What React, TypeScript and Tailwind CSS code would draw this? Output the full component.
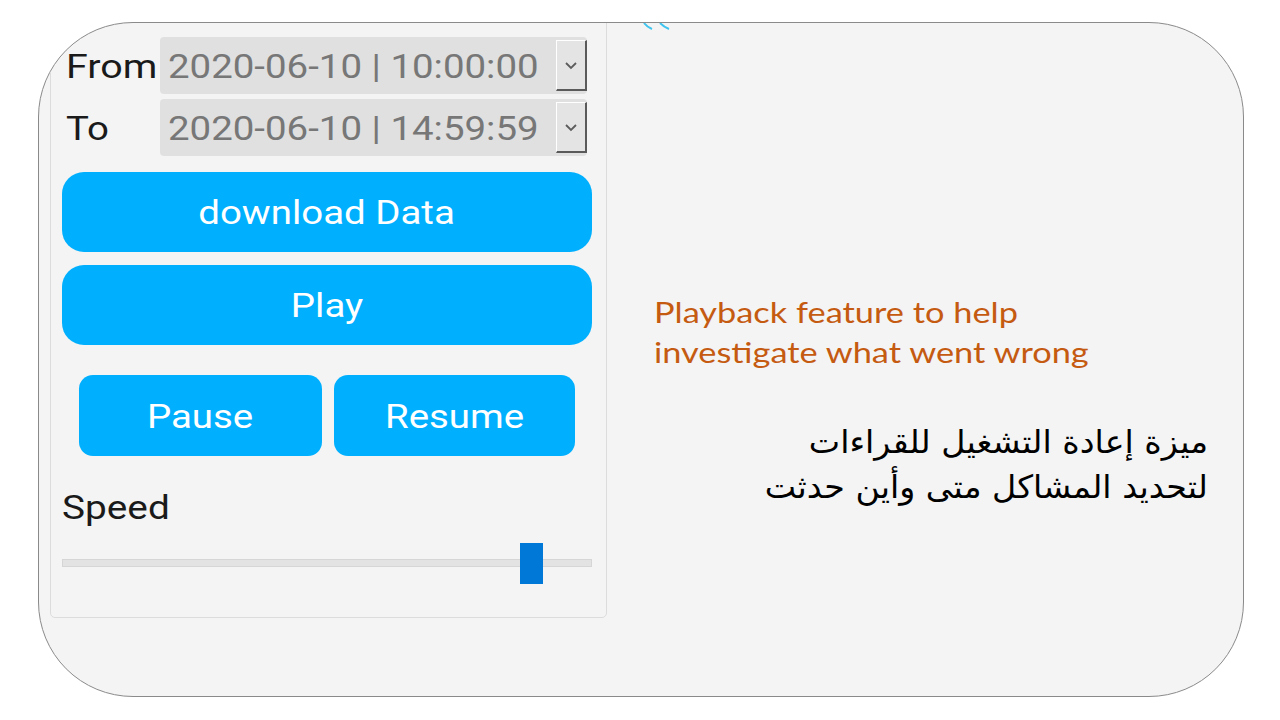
import { useState } from "react";

const roboto = { fontFamily: "Roboto, 'Liberation Sans', sans-serif" };

// the reference is a little stretched sideways, so the glyphs are widened to match
function DateSelect({ value }: { value: string }) {
  return (
    <div className="flex h-[57px] w-[427px] items-center justify-between rounded-[4px] bg-[#e0e0e0] pl-[8px]">
      <span className="inline-block origin-left scale-x-[1.13] text-[34px] leading-none text-[#777777]">{value}</span>
      <div className="flex h-[51px] w-[31px] items-center justify-center border-t border-l border-t-white border-l-white border-r-2 border-b-2 border-r-[#5a5a5a] border-b-[#5a5a5a] bg-[#e4e4e4]">
        <svg width="14" height="9" viewBox="0 0 14 9">
          <path d="M2 2 L7 7 L12 2" fill="none" stroke="#5c5c5c" strokeWidth="1.8" />
        </svg>
      </div>
    </div>
  );
}

function BlueButton({ label, className }: { label: string; className: string }) {
  return (
    <button className={"flex items-center justify-center bg-[#00b0ff] text-[34px] leading-none text-white " + className}>
      <span className="inline-block scale-x-[1.13]">{label}</span>
    </button>
  );
}

export default function App() {
  const [speed] = useState(86.6);

  return (
    <div className="h-[720px] w-[1280px] bg-white pl-[38px] pt-[22px]">
      <div className="flex h-[675px] w-[1206px] overflow-hidden rounded-[95px] border border-[#8a8a8a] bg-[#f4f4f4]">
        {/* playback panel */}
        <div
          style={roboto}
          className="-mt-[20px] ml-[11px] flex h-[615px] w-[557px] shrink-0 flex-col rounded-b-[5px] border border-[#dcdcdc] pt-[33px]"
        >
          <div className="flex items-center">
            <span className="w-[109px] pl-[15px] text-[34px] leading-none text-[#1a1a1a]">
              <span className="inline-block origin-left scale-x-[1.16]">From</span>
            </span>
            <DateSelect value="2020-06-10 | 10:00:00" />
          </div>
          <div className="mt-[5px] flex items-center">
            <span className="w-[109px] pl-[15px] text-[34px] leading-none text-[#1a1a1a]">
              <span className="inline-block origin-left scale-x-[1.13]">To</span>
            </span>
            <DateSelect value="2020-06-10 | 14:59:59" />
          </div>

          <div className="mt-[16px] flex flex-col gap-[13px] px-[11px]">
            <BlueButton label="download Data" className="h-[80px] w-[530px] rounded-[22px]" />
            <BlueButton label="Play" className="h-[80px] w-[530px] rounded-[22px]" />
          </div>

          <div className="mt-[30px] flex gap-[12px] pl-[28px]">
            <BlueButton label="Pause" className="h-[81px] w-[243px] rounded-[14px]" />
            <BlueButton label="Resume" className="h-[81px] w-[241px] rounded-[14px]" />
          </div>

          <div className="mt-[34px] pl-[11px] text-[34px] leading-none text-[#1a1a1a]">
            <span className="inline-block origin-left scale-x-[1.14]">Speed</span>
          </div>

          <div className="ml-[11px] mt-[18px] flex h-[41px] w-[530px] items-center">
            <div className="relative h-[8px] w-full border border-[#d6d6d6] bg-[#e3e3e3]">
              <div
                className="absolute top-[-17px] h-[41px] w-[23px] bg-[#0078d7]"
                style={{ left: `${speed}%` }}
              />
            </div>
          </div>
        </div>

        {/* description */}
        <div className="flex flex-1 flex-col">
          <svg className="ml-[36px] shrink-0" width="32" height="8" viewBox="0 0 32 8">
            <path d="M1 0 Q4 4 9 6" fill="none" stroke="#3ec4ee" strokeWidth="2" />
            <path d="M17 0 Q21 4 26 6" fill="none" stroke="#3ec4ee" strokeWidth="2" />
          </svg>
          <div
            className="ml-[47px] mt-[261px] text-[29px] leading-[40px] text-[#c55a11]"
            style={{ fontFamily: "Lato, 'Open Sans', sans-serif" }}
          >
            <div className="origin-left scale-x-[1.185]">Playback feature to help</div>
            <div className="origin-left scale-x-[1.185]">investigate what went wrong</div>
          </div>
          <div
            dir="rtl"
            className="mr-[35px] mt-[48px] text-right text-[32px] leading-[45px] text-black"
            style={{ fontFamily: "'DejaVu Sans', 'Noto Sans', sans-serif" }}
          >
            <div className="origin-right scale-x-[1.04]">ميزة إعادة التشغيل للقراءات</div>
            <div className="origin-right scale-x-[1.04]">لتحديد المشاكل متى وأين حدثت</div>
          </div>
        </div>
      </div>
    </div>
  );
}
